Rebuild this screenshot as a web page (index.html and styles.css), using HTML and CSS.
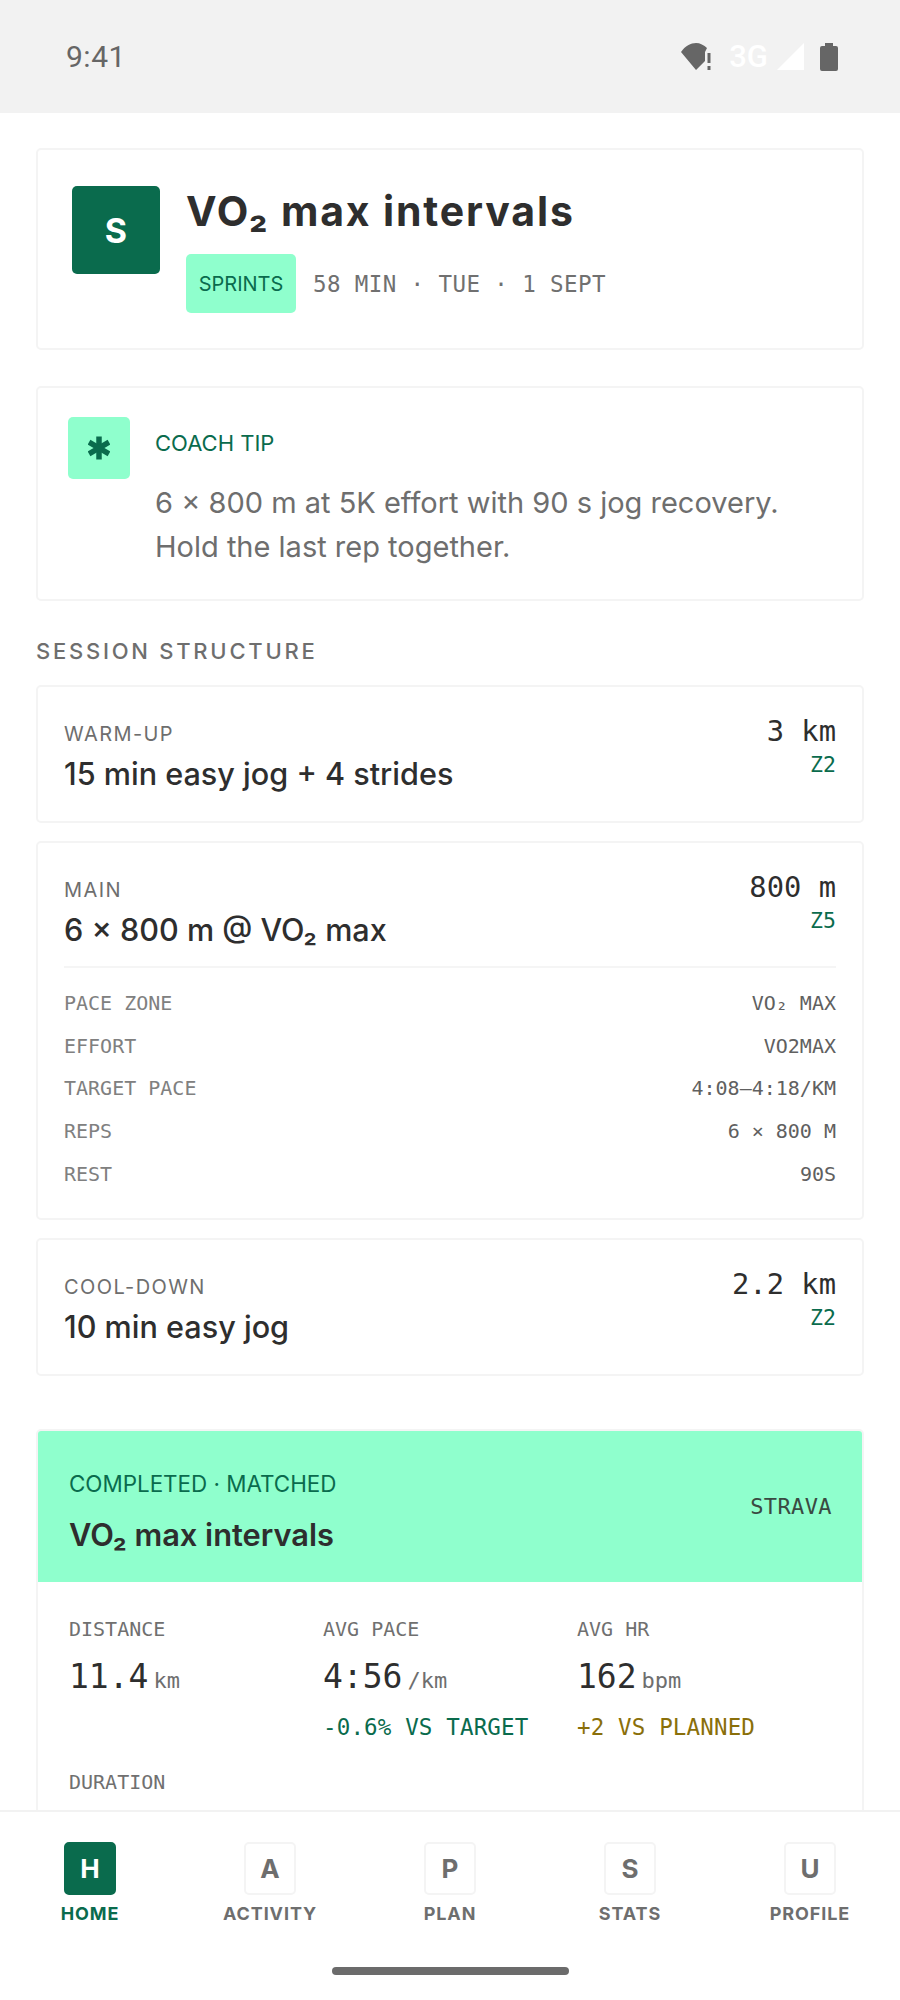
FILE: index.html
```html
<!DOCTYPE html>
<html lang="en">
<head>
<meta charset="utf-8">
<title>VO₂ max intervals</title>
<link rel="stylesheet" href="styles.css">
</head>
<body>
<div class="screen">
  <header class="status">
    <span class="clock">9:41</span>
    <div class="status-icons">
      <svg class="ic-wifi" width="32" height="28" viewBox="0 0 32 28"><path class="fill-grey" d="M0 9 C4 3 10 0 15 0 C19 0 23 2 26 5 L24 9 L24 18 L15 27 Z"/><rect class="fill-grey" x="26.500" y="10" width="3" height="10"/><rect class="fill-grey" x="26.500" y="23" width="3" height="4"/></svg>
      <span class="net">3G</span>
      <svg class="ic-signal" width="28" height="27" viewBox="0 0 28 27"><path class="fill-white" d="M27 0 V27 H0 Z"/></svg>
      <svg class="ic-batt" width="18" height="28" viewBox="0 0 18 28"><path class="fill-grey" d="M5 0 H13 V3 H16 Q18 3 18 5 V26 Q18 28 16 28 H2 Q0 28 0 26 V5 Q0 3 2 3 H5 Z"/></svg>
    </div>
  </header>

  <main class="content">
    <section class="card hero">
      <div class="hero-tile">S</div>
      <div class="hero-body">
        <h1 class="hero-title">VO₂ max intervals</h1>
        <div class="hero-meta">
          <span class="badge">SPRINTS</span>
          <span class="meta-text">58 MIN · TUE · 1 SEPT</span>
        </div>
      </div>
    </section>

    <section class="card tip">
      <div class="tip-tile">
        <svg width="22" height="24" viewBox="0 0 22 24"><g class="ast"><line x1="11" y1="0.500" x2="11" y2="23.500"/><line x1="1" y1="6.250" x2="21" y2="17.750"/><line x1="21" y1="6.250" x2="1" y2="17.750"/></g></svg>
      </div>
      <div class="tip-body">
        <div class="tip-label">COACH TIP</div>
        <p class="tip-text">6 × 800 m at 5K effort with 90 s jog recovery. Hold the last rep together.</p>
      </div>
    </section>

    <h2 class="section-title">SESSION STRUCTURE</h2>

    <section class="card step">
      <div class="step-head">
        <div>
          <div class="step-label">WARM-UP</div>
          <div class="step-title">15 min easy jog + 4 strides</div>
        </div>
        <div class="step-right">
          <div class="step-dist">3 km</div>
          <div class="step-zone">Z2</div>
        </div>
      </div>
    </section>

    <section class="card step">
      <div class="step-head">
        <div>
          <div class="step-label">MAIN</div>
          <div class="step-title">6 × 800 m @ VO₂ max</div>
        </div>
        <div class="step-right">
          <div class="step-dist">800 m</div>
          <div class="step-zone">Z5</div>
        </div>
      </div>
      <dl class="details">
        <div class="detail"><dt>PACE ZONE</dt><dd>VO₂ MAX</dd></div>
        <div class="detail"><dt>EFFORT</dt><dd>VO2MAX</dd></div>
        <div class="detail"><dt>TARGET PACE</dt><dd>4:08–4:18/KM</dd></div>
        <div class="detail"><dt>REPS</dt><dd>6 × 800 M</dd></div>
        <div class="detail"><dt>REST</dt><dd>90S</dd></div>
      </dl>
    </section>

    <section class="card step">
      <div class="step-head">
        <div>
          <div class="step-label">COOL-DOWN</div>
          <div class="step-title">10 min easy jog</div>
        </div>
        <div class="step-right">
          <div class="step-dist">2.2 km</div>
          <div class="step-zone">Z2</div>
        </div>
      </div>
    </section>

    <section class="card result">
      <div class="result-head">
        <div class="result-main">
          <div class="result-label">COMPLETED · MATCHED</div>
          <div class="result-title">VO₂ max intervals</div>
        </div>
        <div class="result-source">STRAVA</div>
      </div>
      <div class="stats">
        <div class="stat">
          <div class="stat-label">DISTANCE</div>
          <div class="stat-value">11.4<span class="unit">km</span></div>
        </div>
        <div class="stat">
          <div class="stat-label">AVG PACE</div>
          <div class="stat-value">4:56<span class="unit">/km</span></div>
          <div class="delta good">-0.6% VS TARGET</div>
        </div>
        <div class="stat">
          <div class="stat-label">AVG HR</div>
          <div class="stat-value">162<span class="unit">bpm</span></div>
          <div class="delta warn">+2 VS PLANNED</div>
        </div>
        <div class="stat">
          <div class="stat-label">DURATION</div>
        </div>
      </div>
    </section>
  </main>

  <footer class="bottom">
    <nav class="tabs">
      <div class="tab active"><span class="tab-tile">H</span><span class="tab-label">HOME</span></div>
      <div class="tab"><span class="tab-tile">A</span><span class="tab-label">ACTIVITY</span></div>
      <div class="tab"><span class="tab-tile">P</span><span class="tab-label">PLAN</span></div>
      <div class="tab"><span class="tab-tile">S</span><span class="tab-label">STATS</span></div>
      <div class="tab"><span class="tab-tile">U</span><span class="tab-label">PROFILE</span></div>
    </nav>
    <div class="home-bar"></div>
  </footer>
</div>
</body>
</html>
```
FILE: styles.css
```css
* { box-sizing: border-box; }
html, body { margin: 0; padding: 0; background: #fff; }
body { font-family: Inter, "Liberation Sans", sans-serif; color: #2e2e2e; }
.screen { width: 900px; height: 2000px; display: flex; flex-direction: column; overflow: hidden; }
h1, h2, p, dl, dd { margin: 0; }

.status { height: 113px; flex: none; background: #f2f2f2; display: flex; align-items: center; justify-content: space-between; padding: 0 62px 0 66px; }
.clock { font-family: Roboto, sans-serif; font-size: 30px; color: #666; letter-spacing: 0.5px; }
.status-icons { display: flex; align-items: center; }
.ic-wifi { margin-right: 16px; }
.net { font-family: Roboto, sans-serif; font-size: 31px; font-weight: 500; color: #fff; margin-right: 9px; }
.ic-signal { margin-right: 15px; }
.fill-grey { fill: #666; }
.fill-white { fill: #fff; }

.content { flex: 1; min-height: 0; overflow: hidden; padding: 35px 36px 0; }
.card { background: #fff; border: 2px solid #f4f4f4; border-radius: 5px; }

.hero { height: 202px; display: flex; gap: 26px; padding: 36px 34px 34px; }
.hero-tile { width: 88px; height: 88px; flex: none; border-radius: 5px; background: #0a6b4d; color: #fff; display: flex; align-items: center; justify-content: center; font-size: 34px; font-weight: 700; }
.hero-title { font-size: 41px; line-height: 52px; font-weight: 700; letter-spacing: 1.850px; color: #2e2e2e; margin-top: -1px; }
.hero-meta { display: flex; align-items: center; gap: 17px; margin-top: 17px; }
.badge { width: 110px; height: 59px; border-radius: 5px; background: #8fffcd; color: #0a6b4d; display: flex; align-items: center; justify-content: center; font-size: 20px; font-weight: 400; }
.meta-text { font-family: "DejaVu Sans Mono", monospace; font-size: 22.500px; letter-spacing: 0.4px; color: #707070; }

.tip { height: 215px; margin-top: 36px; display: flex; gap: 25px; padding: 29px 30px; }
.tip-tile { width: 62px; height: 62px; flex: none; border-radius: 5px; background: #8fffcd; display: flex; align-items: center; justify-content: center; }
.ast { stroke: #0a6b4d; stroke-width: 5.500; }
.tip-label { font-size: 22px; line-height: 26px; color: #0a6b4d; margin-top: 13px; }
.tip-text { font-size: 29px; line-height: 44px; color: #6e6e6e; margin-top: 25px; }

.section-title { font-size: 22px; line-height: 28px; font-weight: 500; letter-spacing: 2.750px; color: #6e6e6e; margin: 36px 0 20px; }

.step { padding: 26px 26px 22px; margin-bottom: 18px; }
.step-head { display: flex; justify-content: space-between; padding-bottom: 5px; }
.step-label { font-size: 20px; line-height: 28px; letter-spacing: 1.400px; color: #6e6e6e; margin-top: 7px; }
.step-title { font-size: 30.600px; line-height: 40px; font-weight: 500; color: #2e2e2e; margin-top: 6px; }
.step-right { text-align: right; font-family: "DejaVu Sans Mono", monospace; }
.step-dist { font-size: 28.800px; line-height: 36px; color: #2e2e2e; }
.step-zone { font-size: 21.500px; line-height: 26px; color: #0a6b4d; margin-top: 3px; }

.details { border-top: 2px solid #f5f5f5; margin-top: 11px; padding-top: 14px; }
.detail { display: flex; justify-content: space-between; font-family: "DejaVu Sans Mono", monospace; font-size: 20px; line-height: 42.700px; }
.detail dt { color: #808080; }
.detail dd { color: #606060; }

.result { margin-top: 53px; overflow: hidden; padding-bottom: 120px; }
.result-head { background: #8fffcd; height: 151px; display: flex; justify-content: space-between; align-items: center; padding: 0 30px 0 31px; }
.result-main { margin-top: 12px; }
.result-label { font-size: 22.400px; line-height: 28px; color: #0a6b4d; }
.result-title { font-size: 30.800px; line-height: 40px; font-weight: 600; color: #2e2e2e; margin-top: 17px; }
.result-source { font-family: "DejaVu Sans Mono", monospace; font-size: 22px; letter-spacing: 0.400px; color: #3a4a42; }

.stats { display: grid; grid-template-columns: repeat(3, 1fr); padding: 33px 31px 0; row-gap: 27px; }
.stat-label { font-family: "DejaVu Sans Mono", monospace; font-size: 20px; line-height: 28px; color: #707070; }
.stat-value { font-family: "DejaVu Sans Mono", monospace; font-size: 33px; line-height: 44px; color: #2e2e2e; margin-top: 12px; }
.unit { font-size: 22px; color: #6e6e6e; margin-left: 5px; }
.delta { font-family: "DejaVu Sans Mono", monospace; font-size: 22.500px; letter-spacing: 0.150px; line-height: 28px; margin-top: 10px; }
.good { color: #0a6b4d; }
.warn { color: #8a6f0a; }

.bottom { flex: none; height: 190px; background: #fff; border-top: 2px solid #f2f2f2; display: flex; flex-direction: column; align-items: center; }
.tabs { display: grid; grid-template-columns: repeat(5, 180px); width: 900px; padding-top: 30px; }
.tab { display: flex; flex-direction: column; align-items: center; }
.tab-tile { width: 52px; height: 53px; border: 2px solid #f4f4f4; border-radius: 5px; display: flex; align-items: center; justify-content: center; font-size: 26px; font-weight: 700; color: #6e6e6e; }
.tab-label { font-size: 18px; line-height: 24px; font-weight: 700; letter-spacing: 0.900px; color: #6e6e6e; margin-top: 7px; }
.tab.active .tab-tile { background: #0a6b4d; border-color: #0a6b4d; color: #fff; }
.tab.active .tab-label { color: #0a6b4d; }
.home-bar { width: 237px; height: 8px; border-radius: 4px; background: #6b6b6b; margin-top: 41px; }
```
